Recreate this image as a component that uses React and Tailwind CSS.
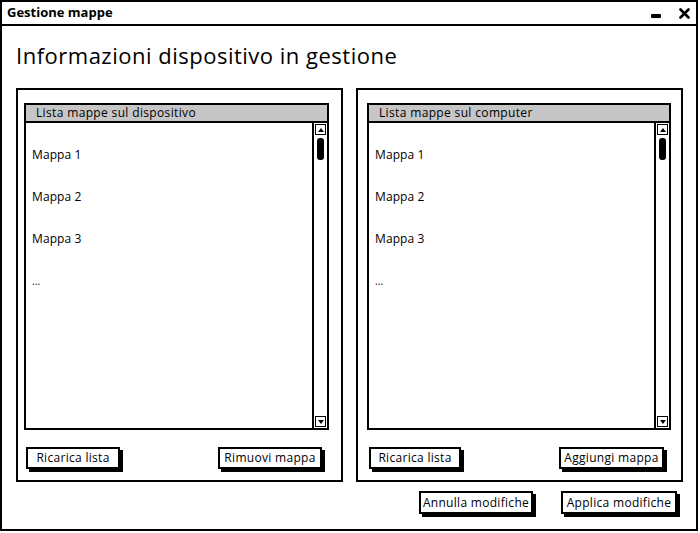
const font = { fontFamily: '"Open Sans", Lato, sans-serif' };

const SketchButton = ({ label, className = '' }) => (
  <button
    className={`flex h-[22px] shrink-0 items-center justify-center whitespace-nowrap border-2 border-black bg-white text-[12px] leading-none tracking-[0.3px] text-black shadow-[3px_3px_0_#000] ${className}`}
  >
    {label}
  </button>
);

const Scrollbar = () => (
  <div className="flex w-[15px] flex-col items-center border-l-2 border-black py-[1px]">
    <div className="flex h-[11px] w-[11px] items-center justify-center border border-black">
      <div className="h-0 w-0 border-x-[3px] border-b-[4px] border-x-transparent border-b-black" />
    </div>
    <div className="mt-[3px] h-[22px] w-[7px] rounded-[3px] bg-black" />
    <div className="flex-1" />
    <div className="flex h-[11px] w-[11px] items-center justify-center border border-black">
      <div className="h-0 w-0 border-x-[3px] border-t-[4px] border-x-transparent border-t-black" />
    </div>
  </div>
);

const MapList = ({ title }) => {
  const items = ['Mappa 1', 'Mappa 2', 'Mappa 3'];
  return (
    <div className="flex h-[327px] flex-col border-2 border-black bg-white">
      <div className="h-[18px] border-b-2 border-black bg-[#c6c6c6] pl-[10px] text-[12px] leading-[16px] tracking-[0.35px] text-black">
        {title}
      </div>
      <div className="flex flex-1">
        <div className="flex-1 pl-[6px] pt-[24px] text-[12px] tracking-[0.1px] text-black">
          {items.map((it) => (
            <div key={it} className="h-[42px] leading-[16px]">
              {it}
            </div>
          ))}
          <div className="leading-[16px] text-[10px]">...</div>
        </div>
        <Scrollbar />
      </div>
    </div>
  );
};

const Group = ({ title, action, pad, btnLeft, btnRight }) => (
  <div className={`flex w-[327px] shrink-0 flex-col border-2 border-black pt-[13px] ${pad}`}>
    <MapList title={title} />
    <div className="mt-[17px] flex justify-between pl-[2px] pr-[7px]">
      <SketchButton label="Ricarica lista" className={btnLeft} />
      <SketchButton label={action} className={btnRight} />
    </div>
  </div>
);

export default function App() {
  return (
    <div className="h-[533px] w-[700px] bg-white" style={font}>
      <div className="flex h-[531px] w-[698px] flex-col border-2 border-black">
        {/* title bar */}
        <div className="flex h-[24px] items-center justify-between border-b-2 border-black pl-[5px] pr-[6px]">
          <span className="text-[13px] font-bold text-black">Gestione mappe</span>
          <div className="flex items-center gap-[18px]">
            <div className="mt-[6px] h-[4px] w-[10px] rounded-[1px] bg-black" />
            <svg width="11" height="11" viewBox="0 0 11 11">
              <path d="M1.5 1.5 L9.5 9.5 M9.5 1.5 L1.5 9.5" stroke="#000" strokeWidth="2.6" strokeLinecap="round" />
            </svg>
          </div>
        </div>

        <div className="flex flex-1 flex-col px-[14px]">
          <h1 className="mt-[15px] text-[22px] leading-[28px] tracking-[0.5px] text-black">
            Informazioni dispositivo in gestione
          </h1>
          <div className="mt-[19px] flex h-[394px] gap-[13px]">
            <Group
              title="Lista mappe sul dispositivo"
              action="Rimuovi mappa"
              pad="pl-[6px] pr-[12px]"
              btnLeft="w-[94px]"
              btnRight="w-[104px]"
            />
            <Group
              title="Lista mappe sul computer"
              action="Aggiungi mappa"
              pad="pl-[9px] pr-[10px]"
              btnLeft="w-[92px]"
              btnRight="w-[105px]"
            />
          </div>
          <div className="mt-[9px] flex justify-end gap-[28px] pr-[5px]">
            <SketchButton label="Annulla modifiche" className="h-[23px] w-[114px]" />
            <SketchButton label="Applica modifiche" className="h-[23px] w-[116px]" />
          </div>
        </div>
      </div>
    </div>
  );
}
